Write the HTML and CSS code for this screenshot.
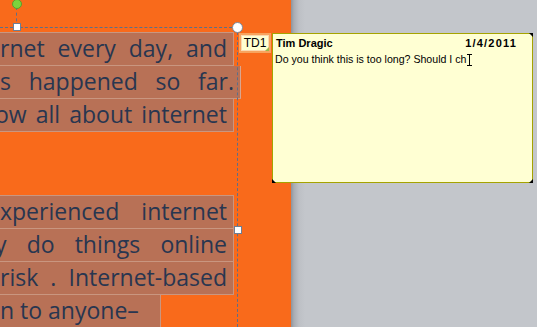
FILE: index.html
```html
<!DOCTYPE html>
<html lang="en">
<head>
  <meta charset="UTF-8" />
  <title>Slide comment</title>
  <link rel="stylesheet" href="styles.css">
</head>
<body>
  <div class="workspace">
    <div class="slide">
      <div class="textbox">
        <div class="line">rnet every day, and</div>
        <div class="line wide">s happened so far.</div>
        <div class="line shift">ow all about internet</div>
        <div class="gap"></div>
        <div class="line">xperienced&nbsp; internet</div>
        <div class="line shift">y do things online</div>
        <div class="line">risk . Internet-based</div>
        <div class="line last">n to anyone–</div>
      </div>

      <!-- selection frame of the text box -->
      <div class="sel-top"></div>
      <div class="sel-right"></div>
      <div class="rot-line"></div>
      <div class="rot-knob"></div>
      <div class="handle h-tl"></div>
      <div class="handle h-mr"></div>
      <div class="corner"></div>
    </div>
    <div class="pasteboard"></div>

    <div class="marker">TD1<span class="marker-tri"></span></div>

    <div class="comment">
      <div class="comment-head">
        <span class="author">Tim Dragic</span>
        <span class="date">1/4/2011</span>
      </div>
      <div class="comment-body">Do you think this is too long? Should I ch<span class="ibeam"></span></div>
      <span class="dot d-tr"></span>
      <span class="dot d-bl"></span>
      <span class="dot d-br"></span>
    </div>
  </div>
</body>
</html>
```

FILE: styles.css
```css
html, body {
  margin: 0;
  padding: 0;
  height: 100%;
  overflow: hidden;
}
.workspace {
  display: flex;
  height: 327px;
  position: relative;
}
.slide {
  width: 291px;
  background: #f96a1b;
  position: relative;
  overflow: hidden;
}
.pasteboard {
  flex: 1;
  background: linear-gradient(to right, #8f939a 0, #a9adb3 3px, #bdc0c5 8px, #c3c6cb 14px);
}
.textbox {
  padding-top: 32px;
  font-family: "Open Sans", sans-serif;
  font-size: 23px;
  color: #283650;
}
.line {
  width: 227px;
  height: 32px;
  line-height: 31px;
  padding-right: 6px;
  background: #b87156;
  border-top: 1px solid #c99680;
  border-bottom: 1px solid #c99680;
  border-right: 1px solid #c99680;
  text-align: justify;
  text-align-last: justify;
  white-space: nowrap;
}
.line + .line {
  border-top: none;
}
.line.wide {
  width: 234px;
  border-right-color: #d9a690;
}
.line.shift {
  margin-left: -5px;
  width: 232px;
}
.line.last {
  width: 150px;
  padding-right: 10px;
  text-align: left;
  text-align-last: left;
}
.gap {
  height: 63px;
}
.sel-top {
  position: absolute;
  left: 0;
  top: 27px;
  width: 237px;
  border-top: 1px dashed #5d6f88;
}
.sel-right {
  position: absolute;
  left: 237px;
  top: 27px;
  height: 300px;
  border-left: 1px dashed #5d6f88;
}
.rot-line {
  position: absolute;
  left: 16px;
  top: 7px;
  height: 20px;
  border-left: 1px dashed #5d6f88;
}
.rot-knob {
  position: absolute;
  left: 12px;
  top: -1px;
  width: 8px;
  height: 8px;
  border-radius: 50%;
  background: #7dd33c;
  border: 1px solid #5b9c2b;
}
.handle {
  position: absolute;
  width: 6px;
  height: 6px;
  background: #fff;
  border: 1px solid #6d7d93;
}
.h-tl { left: 13px; top: 23px; }
.h-mr { left: 234px; top: 226px; }
.corner {
  position: absolute;
  left: 232px;
  top: 22px;
  width: 9px;
  height: 9px;
  border-radius: 50%;
  background: #fff;
  border: 1px solid #7d8898;
}
.marker {
  position: absolute;
  left: 239px;
  top: 33px;
  width: 28px;
  height: 16px;
  border: 2px solid #f7a35e;
  outline: 1px solid #fbd9b0;
  outline-offset: -3px;
  background: #ffffd2;
  font-family: "Liberation Sans", Arial, sans-serif;
  font-size: 12px;
  line-height: 17px;
  text-align: center;
  color: #000;
}
.marker-tri {
  position: absolute;
  right: 0;
  bottom: 0;
  width: 0;
  height: 0;
  border-left: 4px solid transparent;
  border-bottom: 4px solid #9ab84a;
}
.comment {
  position: absolute;
  left: 272px;
  top: 33px;
  width: 259px;
  height: 148px;
  background: #ffffd3;
  border: 1px solid #a5a300;
  font-family: "Liberation Sans", Arial, sans-serif;
  font-size: 11px;
  color: #000;
}
.comment-head {
  display: flex;
  justify-content: space-between;
  padding: 3px 15px 0 3px;
  font-weight: bold;
  line-height: 13px;
}
.date {
  letter-spacing: 1.2px;
}
.comment-body {
  padding: 3px 3px 0 2px;
  font-size: 10.6px;
  line-height: 13px;
}
.ibeam {
  display: inline-block;
  position: relative;
  width: 5px;
  height: 12px;
  vertical-align: -3px;
  margin-left: 1px;
  border-top: 1px solid #000;
  border-bottom: 1px solid #000;
  box-sizing: border-box;
}
.ibeam::after {
  content: "";
  position: absolute;
  left: 2px;
  top: 0;
  bottom: 0;
  border-left: 1px solid #000;
}
.dot {
  position: absolute;
  width: 0;
  height: 0;
}
.d-tr {
  right: -1px;
  top: -1px;
  border-left: 4px solid transparent;
  border-top: 4px solid #000;
}
.d-bl {
  left: -1px;
  bottom: -1px;
  border-right: 4px solid transparent;
  border-bottom: 4px solid #000;
}
.d-br {
  right: -1px;
  bottom: -1px;
  border-left: 4px solid transparent;
  border-bottom: 4px solid #000;
}
```
